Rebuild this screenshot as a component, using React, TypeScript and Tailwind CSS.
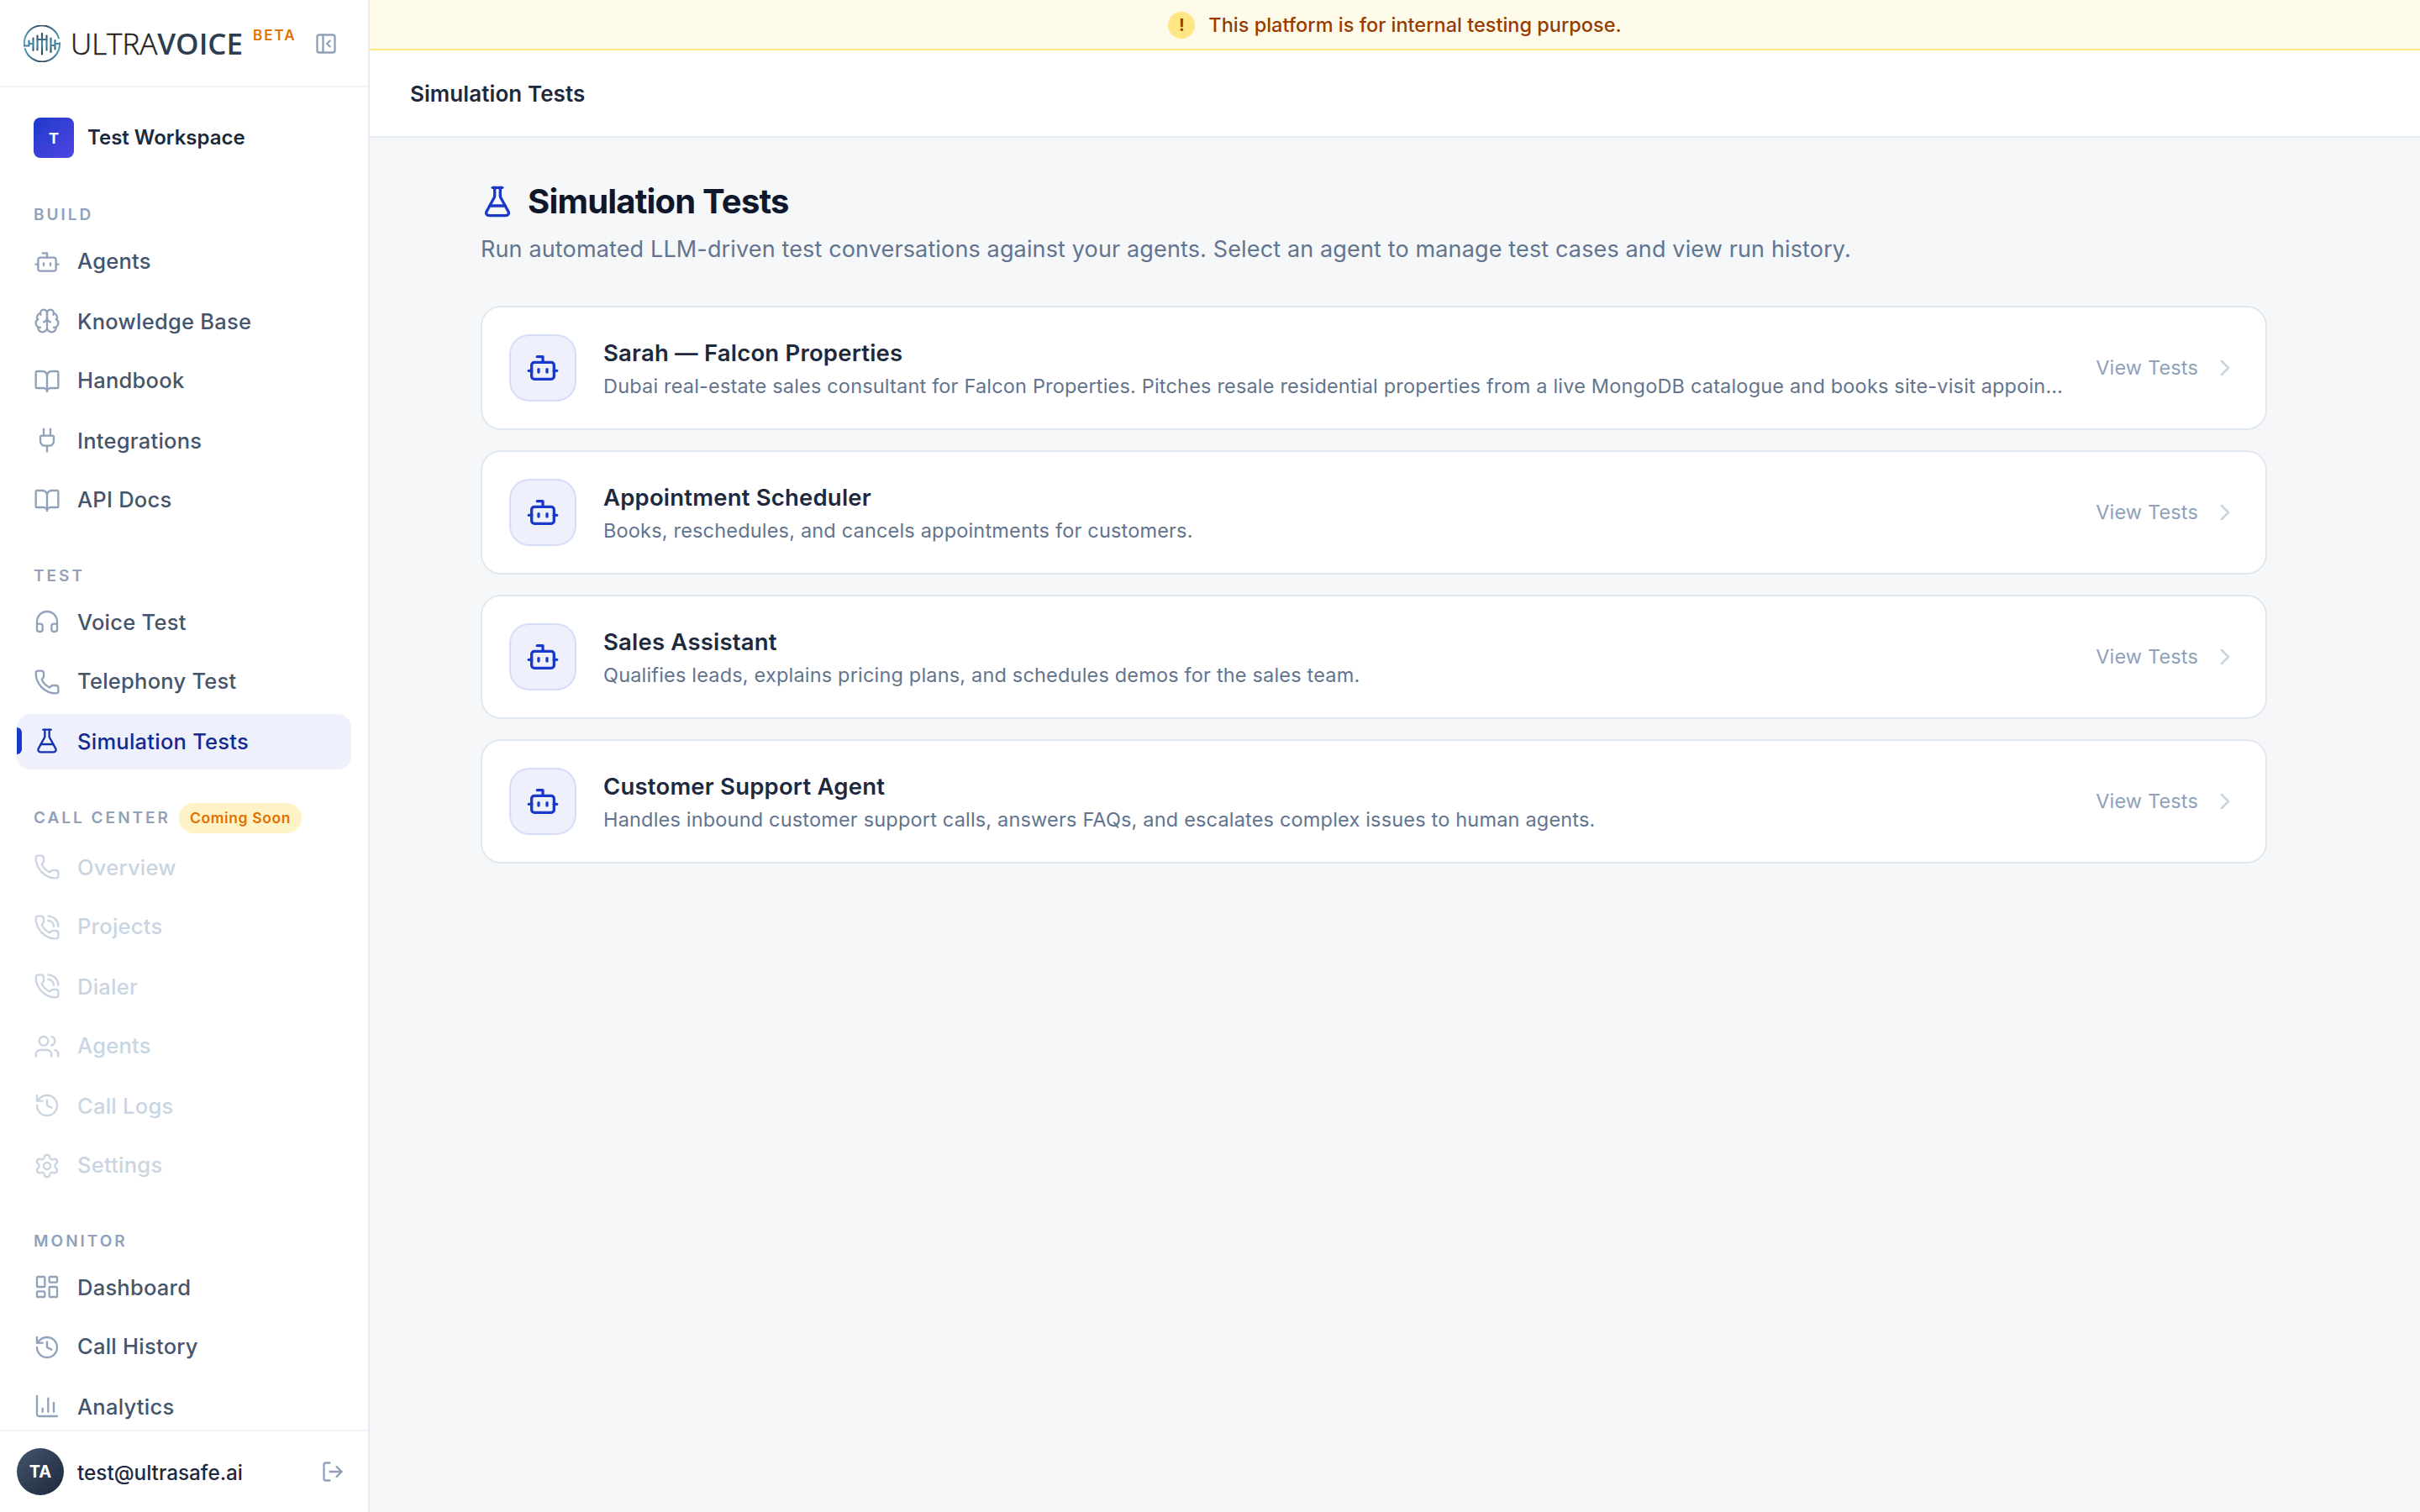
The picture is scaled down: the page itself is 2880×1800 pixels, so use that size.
import {
  BookOpen,
  Bot,
  Brain,
  ChartColumn,
  ChevronRight,
  FlaskConical,
  Headphones,
  History,
  LayoutDashboard,
  LogOut,
  type LucideIcon,
  PanelLeftClose,
  Phone,
  PhoneCall,
  Plug,
  Settings,
  Users,
} from "lucide-react";
import clsx from "clsx";

interface NavItem {
  label: string;
  icon: LucideIcon;
  active?: boolean;
}

interface NavSection {
  title: string;
  spacing: string;
  shift: string;
  badge?: string;
  disabled?: boolean;
  items: NavItem[];
}

const SHIFT_EVEN = "even:[&>svg]:-translate-y-px odd:[&>span]:-translate-y-px";
const SHIFT_ODD = "odd:[&>svg]:-translate-y-px even:[&>span]:-translate-y-px";

const SECTIONS: NavSection[] = [
  {
    title: "Build",
    spacing: "mt-[53px] mb-[8px]",
    shift: SHIFT_EVEN,
    items: [
      { label: "Agents", icon: Bot },
      { label: "Knowledge Base", icon: Brain },
      { label: "Handbook", icon: BookOpen },
      { label: "Integrations", icon: Plug },
      { label: "API Docs", icon: BookOpen },
    ],
  },
  {
    title: "Test",
    spacing: "mt-[42px] mb-[7px]",
    shift: SHIFT_ODD,
    items: [
      { label: "Voice Test", icon: Headphones },
      { label: "Telephony Test", icon: Phone },
      { label: "Simulation Tests", icon: FlaskConical, active: true },
    ],
  },
  {
    title: "Call Center",
    spacing: "mt-[43px] mb-[11px]",
    shift: SHIFT_ODD,
    badge: "Coming Soon",
    disabled: true,
    items: [
      { label: "Overview", icon: Phone },
      { label: "Projects", icon: PhoneCall },
      { label: "Dialer", icon: PhoneCall },
      { label: "Agents", icon: Users },
      { label: "Call Logs", icon: History },
      { label: "Settings", icon: Settings },
    ],
  },
  {
    title: "Monitor",
    spacing: "mt-[42px] mb-[7px]",
    shift: SHIFT_ODD,
    items: [
      { label: "Dashboard", icon: LayoutDashboard },
      { label: "Call History", icon: History },
      { label: "Analytics", icon: ChartColumn },
    ],
  },
];

const AGENTS = [
  {
    name: "Sarah — Falcon Properties",
    description:
      "Dubai real-estate sales consultant for Falcon Properties. Pitches resale residential properties from a live MongoDB catalogue and books site-visit appointments.",
  },
  {
    name: "Appointment Scheduler",
    description: "Books, reschedules, and cancels appointments for customers.",
  },
  {
    name: "Sales Assistant",
    description: "Qualifies leads, explains pricing plans, and schedules demos for the sales team.",
  },
  {
    name: "Customer Support Agent",
    description: "Handles inbound customer support calls, answers FAQs, and escalates complex issues to human agents.",
  },
];

function LogoMark() {
  return (
    <svg viewBox="0 0 44 44" className="size-11 shrink-0" fill="none" strokeLinecap="round" aria-hidden="true">
      <defs>
        <linearGradient id="ring" x1="0" y1="0" x2="44" y2="0" gradientUnits="userSpaceOnUse">
          <stop offset="0" stopColor="#4f9fb8" />
          <stop offset="0.5" stopColor="#2c3e50" />
          <stop offset="1" stopColor="#4f9fb8" />
        </linearGradient>
        <linearGradient id="bars" x1="0" y1="9" x2="0" y2="35" gradientUnits="userSpaceOnUse">
          <stop offset="0" stopColor="#2c3e50" />
          <stop offset="0.5" stopColor="#468ca6" />
          <stop offset="1" stopColor="#2c3e50" />
        </linearGradient>
      </defs>
      <g stroke="url(#ring)" strokeWidth="2">
        <path d="M1 24A21 21 0 0 1 42 15.500" />
        <path d="M43 21A21 21 0 0 1 1.800 28" />
      </g>
      <g stroke="url(#bars)" strokeWidth="2.2">
        <path d="M1 24.500H6.500V18.500M11.500 15.500V30M6.500 22H11.500" />
        <path d="M16.500 12.500V29.500M22 10V34.500M27.500 12.500V29.500M16.500 17H27.500" />
        <path d="M32.500 15.500V32M37.500 18V28.500M32.500 24H37.500M37.500 22H43" />
      </g>
    </svg>
  );
}

function NavLink({ item, shift, disabled }: { item: NavItem; shift: string; disabled?: boolean }) {
  const Icon = item.icon;
  return (
    <a
      className={clsx(
        "relative flex h-[66px] items-center gap-5 rounded-2xl pl-5 text-[25.5px] font-[460] tracking-[0.25px]",
        shift,
        item.active && "bg-[#eef0fc] text-[#142a8c]",
        !item.active && (disabled ? "text-[#cad5e2]" : "text-[#45556c]"),
      )}
    >
      {item.active && <i className="absolute left-0 top-4 h-8 w-1.5 rounded-r-md bg-[#1a39c9]" />}
      <Icon
        className={clsx(
          "size-8 shrink-0",
          item.active && "text-[#1531b0]",
          !item.active && !disabled && "text-[#90a1b9]",
        )}
        strokeWidth={1.75}
      />
      <span className="leading-[34px]">{item.label}</span>
    </a>
  );
}

function Sidebar() {
  return (
    <aside className="flex w-[440px] shrink-0 flex-col border-r-2 border-[#e8ebf4] bg-white">
      <div className="flex h-[104px] shrink-0 items-center border-b-2 border-slate-100 pl-7 pt-px">
        <LogoMark />
        <span className="ml-3 flex items-center font-['Open_Sans'] text-[35px] leading-none text-[#231f20]">
          <span className="font-light [-webkit-text-stroke:0.5px_#231f20]">ULTRA</span>
          <span className="font-semibold text-[#2c3e50]">VOICE</span>
        </span>
        <span className="mb-[18px] ml-3 text-[17px] font-semibold leading-none tracking-[2px] text-[#e17100]">BETA</span>
        <PanelLeftClose className="ml-auto mr-9 size-7 text-[#90a1b9]" strokeWidth={2} />
      </div>

      <nav className="min-h-0 flex-1 overflow-hidden px-5 pt-9">
        <div className="flex h-12 items-center gap-4 pl-5">
          <div className="flex size-12 items-center justify-center rounded-lg bg-linear-to-br from-[#1a39c9] to-[#4f46e5] text-[18px] font-bold text-white">
            T
          </div>
          <span className="text-[24px] font-semibold text-[#1d293d]">Test Workspace</span>
        </div>

        {SECTIONS.map((section) => (
          <section key={section.title}>
            <h3
              className={clsx(
                "flex h-[30px] items-center gap-2.5 pl-5 text-[19px] font-semibold uppercase tracking-[3px] text-[#90a1b9]",
                section.spacing,
              )}
            >
              {section.title}
              {section.badge && (
                <span className="flex h-9 w-[146px] items-center justify-center rounded-full bg-[#fef3c6] text-[17.5px] normal-case tracking-[0.6px] text-[#e17100]">
                  {section.badge}
                </span>
              )}
            </h3>
            <div className="flex flex-col gap-[5px]">
              {section.items.map((item) => (
                <NavLink key={item.label} item={item} shift={section.shift} disabled={section.disabled} />
              ))}
            </div>
          </section>
        ))}
      </nav>

      <div className="flex h-[98px] shrink-0 items-center border-t-2 border-slate-100 pl-5 pr-7">
        <div className="flex size-14 items-center justify-center rounded-full bg-linear-to-br from-[#45556c] to-[#1d293d] text-[20px] font-bold text-white">
          TA
        </div>
        <span className="ml-4 pt-[3px] text-[24.3px] font-[460] text-[#1d293d]">test@ultrasafe.ai</span>
        <LogOut className="ml-auto size-7 text-[#90a1b9]" strokeWidth={2} />
      </div>
    </aside>
  );
}

function AgentCard({ name, description }: { name: string; description: string }) {
  return (
    <a className="flex h-[148px] items-center gap-8 rounded-3xl border-2 border-slate-200 bg-white px-8">
      <div className="flex size-20 shrink-0 items-center justify-center rounded-3xl border-2 border-[#d8ddf7] bg-[#eef0fc] text-[#1a39c9]">
        <Bot className="size-10" />
      </div>
      <div className="min-w-0 flex-1 pt-1">
        <h2 className="text-[27.5px] font-semibold leading-10 tracking-[0.2px] text-[#1d293d]">{name}</h2>
        <p className="truncate text-[23.5px] leading-10 tracking-[0.18px] text-[#62748e]">{description}</p>
      </div>
      <div className="flex shrink-0 items-center gap-4">
        <span className="text-[23.5px] tracking-[0.15px] text-[#90a1b9]">View Tests</span>
        <ChevronRight className="size-8 text-[#cad5e2]" />
      </div>
    </a>
  );
}

export default function App() {
  return (
    <div className="flex h-[1800px] w-[2880px] overflow-hidden bg-[#f5f7f9] font-['Inter',sans-serif]">
      <Sidebar />
      <div className="flex min-w-0 flex-1 flex-col">
        <div className="flex h-[60px] shrink-0 items-center justify-center gap-4 border-b-2 border-[#fee685] bg-[#fffbeb] pt-0.5 text-[#973c00]">
          <span className="flex size-8 items-center justify-center rounded-full bg-[#fee685] text-[20px] font-bold">!</span>
          <span className="text-[23.5px] font-[480]">This platform is for internal testing purpose.</span>
        </div>
        <header className="flex h-[104px] shrink-0 items-center border-b-2 border-[#e5eaf3] bg-white pl-12">
          <span className="text-[26px] font-semibold tracking-[0.08px] text-[#1d293d]">Simulation Tests</span>
        </header>
        <main className="px-[132px] pt-12 pr-[182px]">
          <div className="flex h-14 items-center gap-4">
            <FlaskConical className="size-10 text-[#1a39c9]" />
            <h1 className="text-[40px] font-bold tracking-[-0.02em] text-[#0f172b]">Simulation Tests</h1>
          </div>
          <p className="mt-[9px] text-[27px] leading-10 tracking-[0.14px] text-[#62748e]">
            Run automated LLM-driven test conversations against your agents. Select an agent to manage test cases and view
            run history.
          </p>
          <div className="mt-[47px] flex flex-col gap-6">
            {AGENTS.map((agent) => (
              <AgentCard key={agent.name} {...agent} />
            ))}
          </div>
        </main>
      </div>
    </div>
  );
}
